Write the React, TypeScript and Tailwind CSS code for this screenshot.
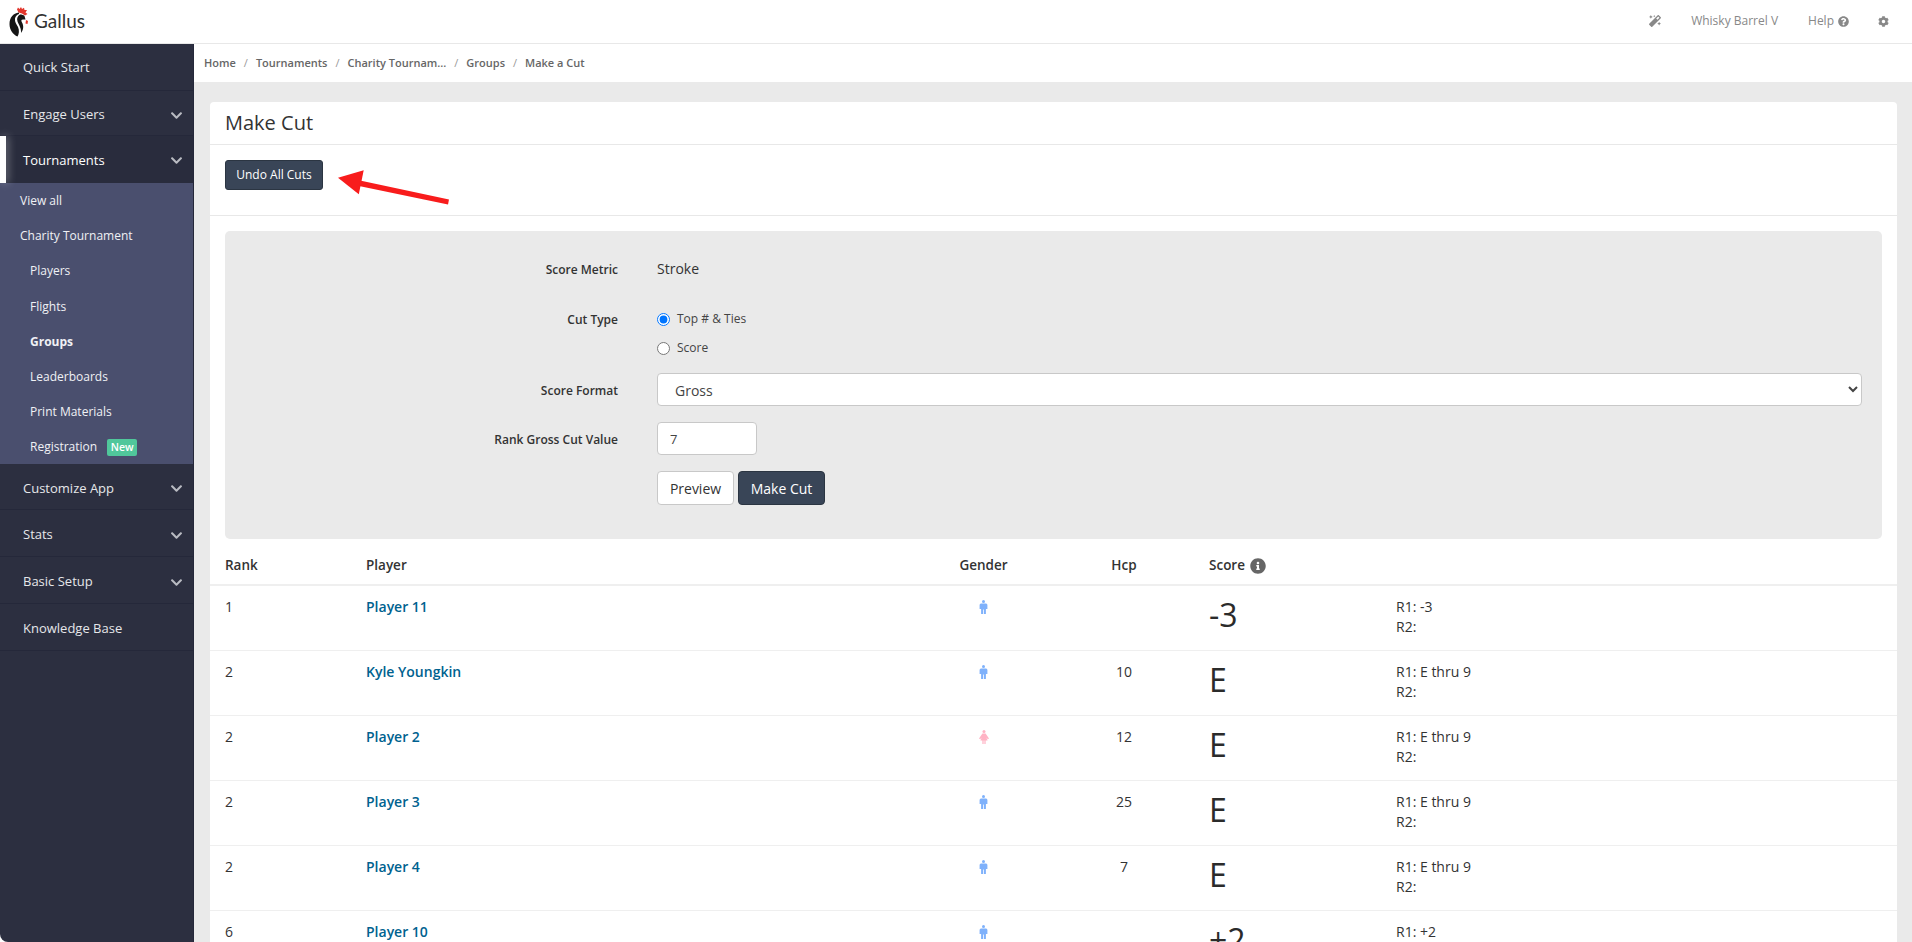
import React from 'react';
import { FaChevronDown, FaCog, FaInfoCircle, FaMagic, FaQuestionCircle } from 'react-icons/fa';

const rowGrid = 'grid grid-cols-[141px_572px_121px_160px_192px_1fr]';

const players = [
  { rank: '1', name: 'Player 11', gender: 'm', hcp: '', score: '-3', r1: 'R1: -3', r2: 'R2:' },
  { rank: '2', name: 'Kyle Youngkin', gender: 'm', hcp: '10', score: 'E', r1: 'R1: E thru 9', r2: 'R2:' },
  { rank: '2', name: 'Player 2', gender: 'f', hcp: '12', score: 'E', r1: 'R1: E thru 9', r2: 'R2:' },
  { rank: '2', name: 'Player 3', gender: 'm', hcp: '25', score: 'E', r1: 'R1: E thru 9', r2: 'R2:' },
  { rank: '2', name: 'Player 4', gender: 'm', hcp: '7', score: 'E', r1: 'R1: E thru 9', r2: 'R2:' },
  { rank: '6', name: 'Player 10', gender: 'm', hcp: '', score: '+2', r1: 'R1: +2', r2: 'R2:' },
];

const Logo = () => (
  <svg width="20" height="30" viewBox="0 0 20 30" className="shrink-0">
    <path d="M8 2.5 L9 0.5 L10.5 2 L12 0 L13 2 L15 0.8 L15.5 3 L18 3 L16.5 5.5 L18.5 7 L16 8.5 L13 6.5 L9.5 5.5 Z" fill="#e2362c" />
    <path d="M17 13 L19 14 L18.5 17 L16.5 16.5 Z" fill="#e2362c" />
    <path d="M10 5.5 C4 6 0.5 11 0.5 17 C0.5 23 4 27.5 8.5 29.5 C10 27 10.5 23.5 9 20 C7.5 17 5.5 15 6 11.5 C6.5 9 8.5 7.5 10 7 Z" fill="#151515" />
    <path d="M11 7.5 C8.5 9 7.5 11.5 8.5 14.5 C9.8 18 12.5 21 12 26 C14.5 23 15 19 13 15.5 C12 13.5 12 12.5 14 12.5 L16.5 12.5 L15.5 9 C14.5 8 13 7.5 11 7.5 Z" fill="#151515" />
  </svg>
);

const GenderIcon = ({ gender }: { gender: string }) =>
  gender === 'm' ? (
    <svg width="9" height="14" viewBox="0 0 9 14" className="block mx-auto">
      <circle cx="4.5" cy="1.5" r="1.5" fill="#7fb1fb" />
      <path d="M2 3.4 H7 Q8.4 3.4 8.4 5 V9 H6.9 V14 H4.9 V9.5 H4.1 V14 H2.1 V9 H0.6 V5 Q0.6 3.4 2 3.4 Z" fill="#7fb1fb" />
    </svg>
  ) : (
    <svg width="10" height="14" viewBox="0 0 10 14" className="block mx-auto">
      <circle cx="5" cy="1.5" r="1.5" fill="#ffb3c4" />
      <path d="M3.4 3.4 H6.6 L10 8.4 L8.8 9.2 L7.4 7.4 L8.6 10.4 H6.6 V14 H5.4 V10.4 H4.6 V14 H3.4 V10.4 H1.4 L2.6 7.4 L1.2 9.2 L0 8.4 Z" fill="#ffb3c4" />
    </svg>
  );

const NavItem = ({ label, arrow, height, top = 'pt-[4px]' }: { label: string; arrow?: boolean; height: string; top?: string }) => (
  <div className={`${height} ${top} flex items-center justify-between pl-[23px] pr-[10px] border-b border-[#25283a] text-[13px] text-[#e6e7ea]`}>
    <span>{label}</span>
    {arrow && <FaChevronDown size={13} className="text-[#b9bbc2]" />}
  </div>
);

const SubItem = ({ label, indent, bold, children }: { label: string; indent?: boolean; bold?: boolean; children?: React.ReactNode }) => (
  <div className={`h-[35.2px] pt-[1px] flex items-center text-[12px] text-[#f0f1f5] ${indent ? 'pl-[30px]' : 'pl-[20px]'} ${bold ? 'font-bold' : ''}`}>
    <span>{label}</span>
    {children}
  </div>
);

const Sidebar = () => (
  <aside className="w-[194px] shrink-0 bg-[#2c2f40] rounded-bl-[8px] border-r border-[#25283a]">
    <NavItem label="Quick Start" height="h-[47px]" top="pt-[2px]" />
    <NavItem label="Engage Users" arrow height="h-[45px]" />
    <div className="relative h-[47px] bg-[#292c3d] flex items-center justify-between pl-[23px] pr-[10px] pt-[2px] text-[13px] text-white">
      <div className="absolute left-0 top-0 bottom-0 w-[6px] bg-white shadow-[2px_0_8px_rgba(255,255,255,0.35)]" />
      <span>Tournaments</span>
      <FaChevronDown size={13} className="text-[#b9bbc2]" />
    </div>
    <div className="bg-[#4a4f6e] h-[281px]">
      <SubItem label="View all" />
      <SubItem label="Charity Tournament" />
      <SubItem label="Players" indent />
      <SubItem label="Flights" indent />
      <SubItem label="Groups" indent bold />
      <SubItem label="Leaderboards" indent />
      <SubItem label="Print Materials" indent />
      <SubItem label="Registration" indent>
        <span className="ml-[10px] h-[17px] w-[30px] rounded-[2px] bg-[#50c79b] text-white text-[10.5px] font-semibold flex items-center justify-center">New</span>
      </SubItem>
    </div>
    <NavItem label="Customize App" arrow height="h-[46px]" />
    <NavItem label="Stats" arrow height="h-[47px]" />
    <NavItem label="Basic Setup" arrow height="h-[47px]" />
    <NavItem label="Knowledge Base" height="h-[47px]" />
  </aside>
);

const FormRow = ({ label, children, className }: { label: string; children: React.ReactNode; className?: string }) => (
  <div className={`flex ${className ?? ''}`}>
    <div className="w-[393px] shrink-0 pt-[2px] text-right text-[12px] font-semibold text-[#333]">{label}</div>
    <div className="ml-[39px] flex-1">{children}</div>
  </div>
);

const CutForm = () => (
  <div className="mx-[15px] mt-[15px] h-[308px] rounded-[5px] bg-[#eaeaea] pt-[28px] pr-[20px]">
    <FormRow label="Score Metric" className="items-center h-[20px]">
      <span className="text-[14px] text-[#333] relative top-[-1px]">Stroke</span>
    </FormRow>
    <FormRow label="Cut Type" className="mt-[30px] items-start">
      <div className="flex flex-col gap-[9px]">
        <label className="flex items-center gap-[7px] h-[20px] text-[12px] text-[#444]">
          <input type="radio" name="cut" defaultChecked className="m-0 w-[13px] h-[13px]" />
          Top # &amp; Ties
        </label>
        <label className="flex items-center gap-[7px] h-[20px] text-[12px] text-[#444]">
          <input type="radio" name="cut" className="m-0 w-[13px] h-[13px]" />
          Score
        </label>
      </div>
    </FormRow>
    <FormRow label="Score Format" className="mt-[15px] items-center">
      <select className="w-full h-[33px] rounded-[4px] border border-[#c8c8c8] bg-white pl-[13px] pr-[4px] pt-[2px] text-[14px] text-[#444]" defaultValue="Gross">
        <option>Gross</option>
      </select>
    </FormRow>
    <FormRow label="Rank Gross Cut Value" className="mt-[16px] items-center">
      <input defaultValue="7" className="block w-[100px] h-[33px] rounded-[4px] border border-[#c8c8c8] bg-white pl-[12px] text-[13px] text-[#444]" />
    </FormRow>
    <div className="mt-[16px] ml-[432px] flex gap-[4px]">
      <button className="w-[77px] h-[34px] rounded-[4px] border border-[#c8c8c8] bg-white text-[14px] text-[#333]">Preview</button>
      <button className="w-[87px] h-[34px] rounded-[4px] border border-[#2b3542] bg-[#394557] text-[14px] text-white">Make Cut</button>
    </div>
  </div>
);

const PlayerTable = () => (
  <div className="text-[14px] text-[#333]">
    <div className={`${rowGrid} h-[47px] pt-[8px] items-center border-b-2 border-[#efefef] text-[13.5px] font-semibold`}>
      <div className="pl-[15px]">Rank</div>
      <div className="pl-[15px]">Player</div>
      <div className="text-center">Gender</div>
      <div className="text-center">Hcp</div>
      <div className="pl-[5px] flex items-center gap-[5px]">
        Score
        <FaInfoCircle size={16} className="text-[#666]" />
      </div>
      <div />
    </div>
    {players.map((p, i) => (
      <div key={i} className={`${rowGrid} h-[65px] pt-[11px] border-b border-[#efefef] leading-[20px]`}>
        <div className="pl-[15px]">{p.rank}</div>
        <div className="pl-[15px] font-semibold text-[#00628f]">{p.name}</div>
        <div className="pt-[3px]"><GenderIcon gender={p.gender} /></div>
        <div className="text-center">{p.hcp}</div>
        <div className="pl-[5px] text-[32px] leading-[36px] text-[#2b2b2b] font-normal">{p.score}</div>
        <div>
          <div>{p.r1}</div>
          <div>{p.r2}</div>
        </div>
      </div>
    ))}
  </div>
);

export default function App() {
  return (
    <div className="relative h-[942px] overflow-hidden bg-white font-['Open_Sans',sans-serif] flex flex-col">
      <header className="h-[44px] shrink-0 flex items-center border-b border-[#e8e8e8] pl-[9px] pr-[23px]">
        <Logo />
        <span className="ml-[5px] font-['Lato',sans-serif] text-[19px] text-[#333]">Gallus</span>
        <div className="ml-auto flex items-center pb-[1px] text-[12px] text-[#888]">
          <FaMagic size={12} className="text-[#888]" />
          <span className="ml-[30px]">Whisky Barrel V</span>
          <span className="ml-[30px]">Help</span>
          <FaQuestionCircle size={11} className="ml-[4px]" />
          <FaCog size={11} className="ml-[29px]" />
        </div>
      </header>
      <div className="flex flex-1 min-h-0">
        <Sidebar />
        <main className="flex-1 min-w-0 bg-[#eaeaea] overflow-hidden">
          <nav className="h-[38px] bg-white flex items-center pl-[10px] gap-[8px] text-[11px] font-semibold text-[#666]">
            <span>Home</span>
            <span className="font-normal text-[#999]">/</span>
            <span>Tournaments</span>
            <span className="font-normal text-[#999]">/</span>
            <span>Charity Tournam...</span>
            <span className="font-normal text-[#999]">/</span>
            <span>Groups</span>
            <span className="font-normal text-[#999]">/</span>
            <span>Make a Cut</span>
          </nav>
          <section className="ml-[16px] mr-[15px] mt-[20px] bg-white rounded-t-[4px]">
            <div className="h-[43px] flex items-center pl-[15px] border-b border-[#e8e8e8] text-[20px] text-[#333]">Make Cut</div>
            <div className="h-[71px] pt-[15px] pl-[15px] border-b border-[#e8e8e8]">
              <button className="w-[98px] h-[30px] rounded-[3px] border border-[#2b3542] bg-[#394557] text-[12px] text-white">Undo All Cuts</button>
            </div>
            <CutForm />
            <PlayerTable />
          </section>
        </main>
      </div>
      <svg width="125" height="45" viewBox="0 0 125 45" className="absolute left-[330px] top-[165px]">
        <polygon points="8,12.7 33.7,5.3 28.8,29.3" fill="#f81c1c" />
        <polygon points="30,15.5 119,34.5 118,39.5 29,21" fill="#f81c1c" />
      </svg>
    </div>
  );
}
